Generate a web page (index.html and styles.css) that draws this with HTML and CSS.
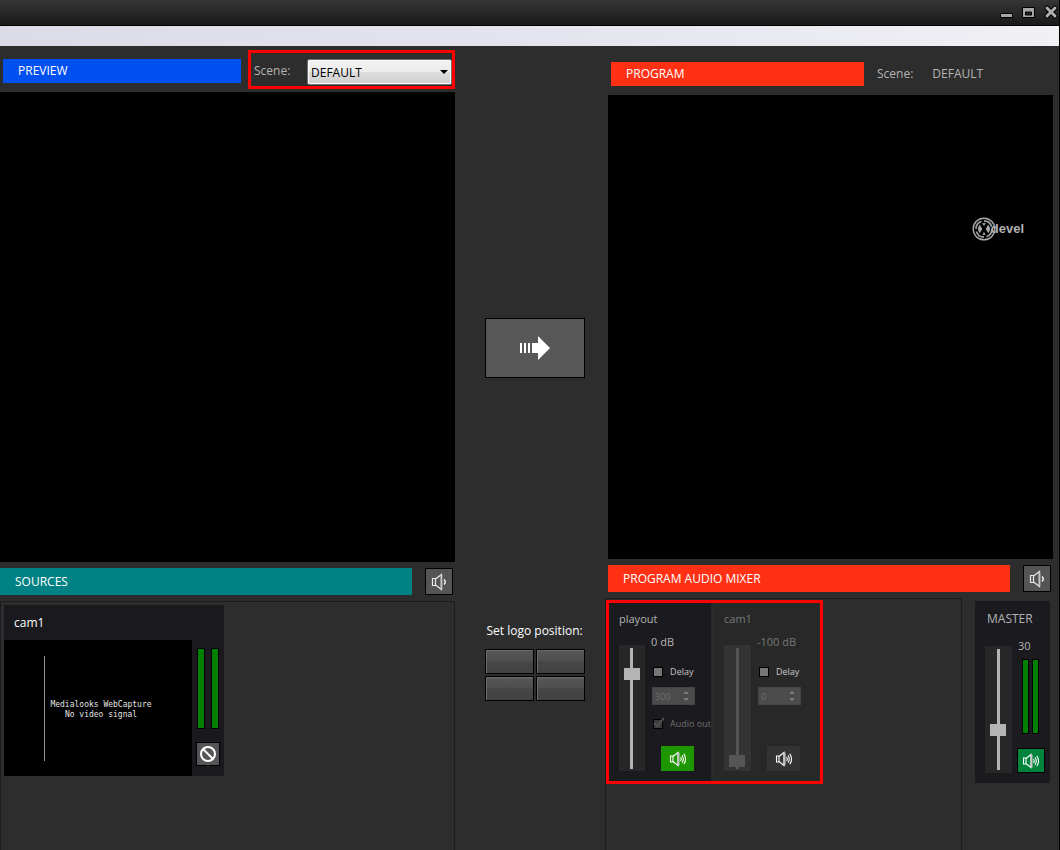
FILE: index.html
```html
<!DOCTYPE html>
<html lang="en">
<head>
<meta charset="utf-8">
<title>Live Mixer</title>
<link rel="stylesheet" href="styles.css">
</head>
<body>
<svg class="symbols" aria-hidden="true">
  <symbol id="speaker-low" viewBox="0 0 16 18">
    <path d="M1.5 5.5h3v7h-3zM4.500 6l6-4.500v15l-6-4.500" fill="none" stroke="#e8e8e8" stroke-width="1.200"/>
    <path d="M9.500 2h1.800v14H9.500z" fill="#c4c4c4"/>
    <path d="M13 6.500q2.500 2.500 0 5" fill="none" stroke="#fff" stroke-width="1.300"/>
  </symbol>
  <symbol id="speaker-high" viewBox="0 0 18 16">
    <path d="M1.500 5h2.500v6H1.500zM4 5.500l5-4v13l-5-4" fill="none" stroke="#fff" stroke-width="1.100"/>
    <path d="M8.300 1.500H10.500v13H8.300z" fill="#c4c4c4"/>
    <path d="M11.500 6q1.500 2 0 4M13 4.200q2.500 3.800 0 7.600M14.800 2.800q3.500 5.200 0 10.400" fill="none" stroke="#fff" stroke-width="1.100"/>
  </symbol>
</svg>
<div class="window">
  <header class="titlebar">
    <button class="win-btn" aria-label="Minimize"><svg width="14" height="16"><path d="M.5 9.500h12v4H.5z" fill="#a6a6a6" stroke="#000"/></svg></button>
    <button class="win-btn" aria-label="Maximize"><svg width="14" height="16"><path d="M.5 3.500h12v10H.5z" fill="#a6a6a6" stroke="#000"/><path d="M3.500 8h6v3h-6z" fill="#222" stroke="#000"/></svg></button>
    <button class="win-btn" aria-label="Close"><svg width="14" height="16"><path d="M3 4l8 8M11 4l-8 8" stroke="#000" stroke-width="5" stroke-linecap="round"/><path d="M3 4l8 8M11 4l-8 8" stroke="#b0b0b0" stroke-width="3" stroke-linecap="round"/></svg></button>
  </header>
  <div class="strip"></div>
  <main class="workspace">
    <section class="column">
      <div class="head">
        <h2 class="bar bar-preview">PREVIEW</h2>
        <div class="scene-pick">
          <label for="scene">Scene:</label>
          <span class="select-wrap"><select id="scene"><option>DEFAULT</option></select></span>
        </div>
      </div>
      <div class="video"></div>
      <div class="subhead">
        <h2 class="bar bar-sources">SOURCES</h2>
        <button class="icon-btn" aria-label="Sources audio"><svg width="16" height="18"><use href="#speaker-low"/></svg></button>
      </div>
      <div class="panel sources">
        <article class="source">
          <h3 class="source-name">cam1</h3>
          <div class="source-body">
            <div class="thumb">
              <span class="thumb-line"></span>
              <p class="thumb-text">Medialooks WebCapture<br>No video signal</p>
            </div>
            <div class="source-side">
              <div class="meters"><span class="meter"></span><span class="meter"></span></div>
              <button class="block-btn" aria-label="Block source"><svg width="18" height="18" viewBox="0 0 18 18"><circle cx="9" cy="9" r="7" fill="none" stroke="#fff" stroke-width="2"/><path d="M4 4l10 10" stroke="#fff" stroke-width="2"/></svg></button>
            </div>
          </div>
        </article>
      </div>
    </section>

    <section class="center">
      <div class="take-area">
        <button class="take" aria-label="Send to program"><svg width="32" height="26"><path d="M1 8h2v10H1zM5 8h2v10H5zM9 8h2v10H9zM13 8h6V1l12 12-12 12v-7h-6z" fill="#fff"/></svg></button>
      </div>
      <div class="logo-area">
        <p class="logo-label">Set logo position:</p>
        <div class="logo-grid">
          <button aria-label="Top left"></button><button aria-label="Top right"></button>
          <button aria-label="Bottom left"></button><button aria-label="Bottom right"></button>
        </div>
      </div>
    </section>

    <section class="column program">
      <div class="head">
        <h2 class="bar bar-program">PROGRAM</h2>
        <p class="scene-now"><span>Scene:</span><span>DEFAULT</span></p>
      </div>
      <div class="video">
        <div class="brand">
          <svg width="24" height="26" viewBox="0 0 24 26"><circle cx="12" cy="13" r="10.800" fill="none" stroke="#aaa" stroke-width="1.400"/><circle cx="12" cy="13" r="8" fill="none" stroke="#999" stroke-width="1.800" stroke-dasharray="10 2.500"/><circle cx="12" cy="13" r="6" fill="#aaa"/><path d="M8.500 7l7 12M15.500 7l-7 12" stroke="#000" stroke-width="3"/></svg>
          <span>devel</span>
        </div>
      </div>
      <div class="subhead">
        <h2 class="bar bar-mixer">PROGRAM AUDIO MIXER</h2>
        <button class="icon-btn" aria-label="Mixer audio"><svg width="16" height="18"><use href="#speaker-low"/></svg></button>
      </div>
      <div class="mixer-row">
        <div class="panel mixer">
          <div class="channels">
            <article class="channel channel-on">
              <h3>playout</h3>
              <div class="channel-body">
                <div class="fader"><input type="range" min="0" max="100" value="82" aria-label="playout level"></div>
                <div class="controls">
                  <p class="db">0 dB</p>
                  <label class="check"><input type="checkbox">Delay</label>
                  <span class="spin"><input type="number" value="300" disabled aria-label="playout delay"><svg width="6" height="12"><path d="M0 4l3-3 3 3zM0 8h6l-3 3z" fill="#7c7c7c"/></svg></span>
                  <label class="check check-off"><input type="checkbox" checked disabled><svg class="tick" width="12" height="12"><path d="M2 6l3 3 7-8" fill="none" stroke="#505050" stroke-width="2"/></svg>Audio out</label>
                  <button class="mute mute-on" aria-label="playout audio"><svg width="18" height="16"><use href="#speaker-high"/></svg></button>
                </div>
              </div>
            </article>
            <article class="channel channel-off">
              <h3>cam1</h3>
              <div class="channel-body">
                <div class="fader"><input type="range" min="0" max="100" value="2" aria-label="cam1 level"></div>
                <div class="controls">
                  <p class="db">-100 dB</p>
                  <label class="check"><input type="checkbox">Delay</label>
                  <span class="spin"><input type="number" value="0" disabled aria-label="cam1 delay"><svg width="6" height="12"><path d="M0 4l3-3 3 3zM0 8h6l-3 3z" fill="#7c7c7c"/></svg></span>
                  <button class="mute" aria-label="cam1 audio"><svg width="18" height="16"><use href="#speaker-high"/></svg></button>
                </div>
              </div>
            </article>
          </div>
        </div>
        <article class="master">
          <h3>MASTER</h3>
          <div class="channel-body">
            <div class="fader"><input type="range" min="0" max="100" value="31" aria-label="Master level"></div>
            <div class="master-side">
              <p>30</p>
              <div class="meters"><span class="meter"></span><span class="meter"></span></div>
              <button class="mute master-mute" aria-label="Master audio"><svg width="18" height="16"><use href="#speaker-high"/></svg></button>
            </div>
          </div>
        </article>
      </div>
    </section>
  </main>
</div>
</body>
</html>
```

FILE: styles.css
```css
* { box-sizing: border-box; }
body, h2, h3, p { margin: 0; font-weight: 400; }
body {
  background: #2d2d2d;
  color: #b4b4b4;
  font: 12px/16px "Open Sans", "Noto Sans", sans-serif;
}
button, input, select { font: inherit; margin: 0; padding: 0; }
button { display: flex; align-items: center; justify-content: center; border: 1px solid #000; border-radius: 0; }
h2, h3 { font-size: 12px; }
svg { display: block; flex: none; }
.symbols { position: absolute; width: 0; height: 0; }

.window { display: flex; flex-direction: column; min-height: 100vh; border-right: 1px solid #000; }
.titlebar {
  display: flex; justify-content: flex-end; align-items: center; gap: 8px;
  height: 26px; padding: 0 1px 2px 0; border-bottom: 1px solid #000;
  background: linear-gradient(#363636, #191919);
}
.win-btn { width: 14px; height: 16px; background: none; border: 0; }
.strip { height: 20px; background: linear-gradient(90deg, #dcdce8, #e4e4ee 50%, #f0f0f5); }

.workspace { flex: 1; display: grid; grid-template-columns: 455fr 153fr 445fr; padding-right: 6px; }
.column { display: flex; flex-direction: column; min-width: 0; }
.head { display: flex; align-items: center; height: 46px; padding-left: 3px; }
.program .head { height: 49px; padding-top: 7px; }
.bar { display: flex; align-items: center; min-width: 0; height: 24px; padding-left: 15px; color: #fff; }
.bar-preview { flex: 1; background: #0050f0; margin: 4px 7px 0 0; }
.bar-program { width: 253px; background: #ff3014; }
.bar-sources { flex: 1; height: 27px; background: #008284; }
.bar-mixer { flex: 1; height: 27px; background: #ff3014; }

.scene-pick {
  display: flex; align-items: center; justify-content: space-between;
  width: 207px; height: 39px; margin-top: 1px; padding: 4px 0 0 3px;
  border: 3px solid #f00;
}
.scene-pick label { padding-bottom: 2px; }
.select-wrap { position: relative; width: 145px; }
.select-wrap::after {
  content: ""; position: absolute; right: 4px; top: 11px;
  border: 4px solid transparent; border-top-color: #000; border-bottom: 0; pointer-events: none;
}
select {
  display: block; appearance: none; width: 100%; height: 26px; padding: 2px 0 0 3px;
  color: #000; border: 1px solid #707070; border-radius: 2px;
  background: linear-gradient(#f2f2f2, #ebebeb 50%, #dddddd 50%, #cfcfcf);
  box-shadow: inset 0 0 0 1px #fafafa;
}
.scene-now { display: flex; gap: 19px; padding-left: 13px; }

.video { flex: 1; position: relative; min-height: 240px; background: #000; }
.brand { position: absolute; top: 26%; right: 29px; display: flex; align-items: center; color: #b0b0b0; }
.brand span { margin-left: -5px; font: bold 13px/20px "Liberation Sans", sans-serif; }

.subhead { display: flex; gap: 13px; padding: 6px 2px 6px 0; }
.icon-btn { width: 28px; height: 27px; background: #555; }
.panel { height: 249px; border: 1px solid #1c1c1c; border-bottom: 0; }
.sources { padding: 3px; }
.source { width: 220px; background: #1a1a1e; }
.source-name { height: 35px; padding: 10px; color: #fff; }
.source-body { display: flex; }
.thumb { position: relative; flex: 1; height: 136px; padding-top: 60px; background: #000; }
.thumb-line { position: absolute; left: 40px; top: 16px; bottom: 15px; width: 1px; background: #8c8c8c; }
.thumb-text { color: #e6e6e6; font: 8px/10px "DejaVu Sans Mono", monospace; padding-left: 6px; text-align: center; }
.source-side { display: flex; flex-direction: column; align-items: center; gap: 13px; width: 32px; padding-top: 8px; }
.meters { display: flex; gap: 6px; height: 81px; }
.meter { width: 8px; border: 1px solid #000; background: #008000; }
.block-btn { width: 24px; height: 24px; background: #555; }

.center { display: flex; flex-direction: column; align-items: center; padding-left: 6px; }
.take-area { flex: 1; display: flex; align-items: center; padding-top: 26px; }
.take { width: 100px; height: 60px; background: #575757; }
.logo-area { width: 100px; height: 227px; }
.logo-label { padding-left: 2px; margin-bottom: 10px; color: #fff; white-space: nowrap; }
.logo-grid { display: grid; grid-template-columns: 1fr 1fr; gap: 2px; }
.logo-grid button {
  height: 25px; background: linear-gradient(#585858, #4e4e4e 48%, #464646 52%, #424242);
  box-shadow: inset 1px 1px 0 #6c6c6c;
}

.mixer-row { display: flex; gap: 13px; margin-left: -3px; padding-right: 3px; height: 252px; }
.mixer { flex: 1; height: 252px; padding-top: 1px; }
.channels { display: flex; gap: 3px; width: 217px; border: 3px solid #f00; background: #2b2b2b; }
.channel { height: 178px; padding: 8px 0 0 10px; }
.channel-on { width: 102px; background: #1a1a1f; }
.channel-off { flex: 1; background: #282828; color: #787878; }
.channel h3 { height: 16px; font-size: 11px; }
.channel-body { display: flex; }
.fader { display: flex; justify-content: center; width: 27px; height: 126px; margin-top: 18px; padding: 3px 1px 2px 0; background: #272727; }
.fader input {
  appearance: none; writing-mode: vertical-lr; direction: rtl;
  width: 16px; height: 121px; background: linear-gradient(#b4b4b4, #b4b4b4) center / 3px 100% no-repeat;
}
.fader input::-webkit-slider-runnable-track { width: 16px; height: 100%; }
.fader input::-webkit-slider-thumb { appearance: none; width: 16px; height: 12px; background: #b4b4b4; border: 0; }
.channel-off .fader { background: #333; }
.channel-off .fader input { background-image: linear-gradient(#555, #555); }
.channel-off .fader input::-webkit-slider-thumb { background: #555; }

.controls { position: relative; display: flex; flex-direction: column; flex: 1; padding-left: 7px; margin-top: 7px; }
.db { height: 16px; margin: 0 0 14px -1px; font-size: 11px; white-space: nowrap; }
.check { position: relative; display: flex; align-items: center; gap: 7px; height: 16px; padding-left: 1px; font-size: 9px; color: #c8c8c8; white-space: nowrap; }
.check input { appearance: none; width: 10px; height: 10px; border: 1px solid #000; background: #777; }
.check-off { color: #707070; }
.check-off input { background: #3c3c3c; }
.tick { position: absolute; left: 0; top: 1px; }
.spin { position: relative; width: 43px; height: 18px; margin: 7px 0 11px; }
.spin input { display: block; width: 100%; height: 100%; padding-left: 2px; border: 1px solid #444; border-radius: 0; background: #4b4b4b; color: #707070; font-size: 9px; appearance: textfield; }
.spin svg { position: absolute; right: 6px; top: 3px; }
.mute { width: 33px; height: 25px; margin: auto 0 0 9px; border: 0; background: #333; }
.mute-on { background: #1e9600; }

.master { width: 75px; height: 182px; margin-top: 3px; padding: 10px 5px 0 10px; background: #1a1a1f; }
.master h3 { padding-left: 2px; height: 16px; }
.master .fader { height: 127px; margin-top: 19px; }
.master-side { display: flex; flex-direction: column; padding-left: 5px; margin-top: 11px; }
.master-side p { padding-left: 1px; height: 16px; margin-bottom: 5px; font-size: 11px; }
.master .meters { gap: 3px; height: 75px; padding-left: 5px; }
.master .meter { width: 7px; }
.master-mute { width: 28px; margin: auto 0 0; background: #00843c; border: 1px solid #000; }
```
